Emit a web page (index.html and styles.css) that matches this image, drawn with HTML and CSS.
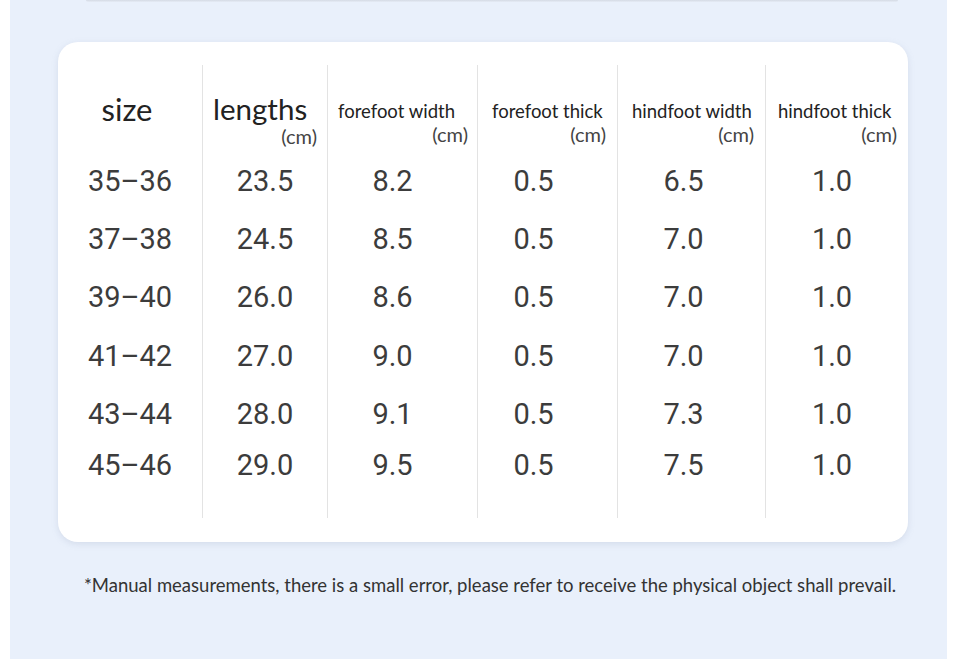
FILE: index.html
```html
<!DOCTYPE html>
<html>
<head>
<meta charset="utf-8">
<link rel="stylesheet" href="styles.css">
</head>
<body>
<div class="panel">
  <div class="prev-edge"></div>
  <div class="card">
    <div class="col c1">
      <div class="head"><span class="title big size">size</span></div>
      <div class="cell">35–36</div><div class="cell">37–38</div><div class="cell">39–40</div>
      <div class="cell tall">41–42</div><div class="cell">43–44</div><div class="cell last">45–46</div>
    </div>
    <div class="col c2">
      <div class="head"><span class="title big">lengths</span><span class="unit big-unit">(cm)</span></div>
      <div class="cell">23.5</div><div class="cell">24.5</div><div class="cell">26.0</div>
      <div class="cell tall">27.0</div><div class="cell">28.0</div><div class="cell last">29.0</div>
    </div>
    <div class="col c3">
      <div class="head small"><span class="title">forefoot width</span><span class="unit">(cm)</span></div>
      <div class="cell">8.2</div><div class="cell">8.5</div><div class="cell">8.6</div>
      <div class="cell tall">9.0</div><div class="cell">9.1</div><div class="cell last">9.5</div>
    </div>
    <div class="col c4">
      <div class="head small"><span class="title">forefoot thick</span><span class="unit">(cm)</span></div>
      <div class="cell">0.5</div><div class="cell">0.5</div><div class="cell">0.5</div>
      <div class="cell tall">0.5</div><div class="cell">0.5</div><div class="cell last">0.5</div>
    </div>
    <div class="col c5">
      <div class="head small"><span class="title">hindfoot width</span><span class="unit">(cm)</span></div>
      <div class="cell">6.5</div><div class="cell">7.0</div><div class="cell">7.0</div>
      <div class="cell tall">7.0</div><div class="cell">7.3</div><div class="cell last">7.5</div>
    </div>
    <div class="col c6">
      <div class="head small"><span class="title">hindfoot thick</span><span class="unit">(cm)</span></div>
      <div class="cell">1.0</div><div class="cell">1.0</div><div class="cell">1.0</div>
      <div class="cell tall">1.0</div><div class="cell">1.0</div><div class="cell last">1.0</div>
    </div>
  </div>
  <p class="note">*Manual measurements, there is a small error, please refer to receive the physical object shall prevail.</p>
</div>
</body>
</html>
```
FILE: styles.css
```css
html, body {
  margin: 0;
  padding: 0;
  background: #ffffff;
}
body {
  font-family: "Lato", "Open Sans", sans-serif;
  color: #333;
}
.panel {
  margin-left: 10px;
  width: 937px;
  height: 659px;
  background: #e9f0fb;
  display: flex;
  flex-direction: column;
}
.prev-edge {
  margin-left: 76px;
  width: 812px;
  height: 2px;
  background: linear-gradient(#d4dae4, #e6ecf6);
  border-radius: 0 0 2px 2px;
}
.card {
  margin-top: 40px;
  margin-left: 48px;
  width: 850px;
  height: 500px;
  box-sizing: border-box;
  padding-top: 23px;
  background: #fff;
  border-radius: 20px;
  box-shadow: 0 2px 6px rgba(150, 165, 190, 0.25);
  display: grid;
  grid-template-columns: 144px 125px 150px 140px 148px 143px;
  align-items: start;
}
.col {
  height: 453px;
  display: flex;
  flex-direction: column;
}
.col + .col {
  border-left: 1.5px solid #e3e3e3;
}
.head {
  height: 87px;
  box-sizing: border-box;
  padding: 29px 10px 0 13px;
  display: flex;
  flex-direction: column;
}
.c2 .head {
  padding-left: 10px;
}
.title {
  display: block;
  white-space: nowrap;
  color: #222;
}
.big {
  font-size: 29.5px;
  line-height: 30px;
}
.size {
  font-size: 31px;
  text-align: center;
  padding-left: 4px;
  margin-left: -13px;
}
.unit {
  display: block;
  text-align: right;
  font-size: 20px;
  line-height: 20px;
  color: #444;
}
.big-unit {
  margin-top: 2px;
}
.head.small {
  padding: 36px 9px 0 10px;
}
.head.small .title {
  font-size: 18.5px;
  line-height: 20px;
}
.head.small .unit {
  margin-top: 3px;
}
.c4 .head.small { padding-left: 14px; padding-right: 11px; }
.c5 .head.small { padding-left: 14px; padding-right: 11px; }
.c6 .head.small { padding-left: 12px; padding-right: 11px; }
.cell {
  height: 58px;
  display: flex;
  align-items: center;
  justify-content: center;
  font-family: "Roboto", sans-serif;
  font-size: 29px;
  color: #3c3c3c;
}
.cell.tall { height: 59px; }
.cell.last { height: 44px; }
.c3 .cell { padding-right: 20px; }
.c4 .cell { padding-right: 28px; }
.c5 .cell { padding-right: 16px; }
.c6 .cell { padding-right: 10px; }
.note {
  margin: 32px 0 0 74px;
  font-size: 18.5px;
  color: #333;
  white-space: nowrap;
}
```
